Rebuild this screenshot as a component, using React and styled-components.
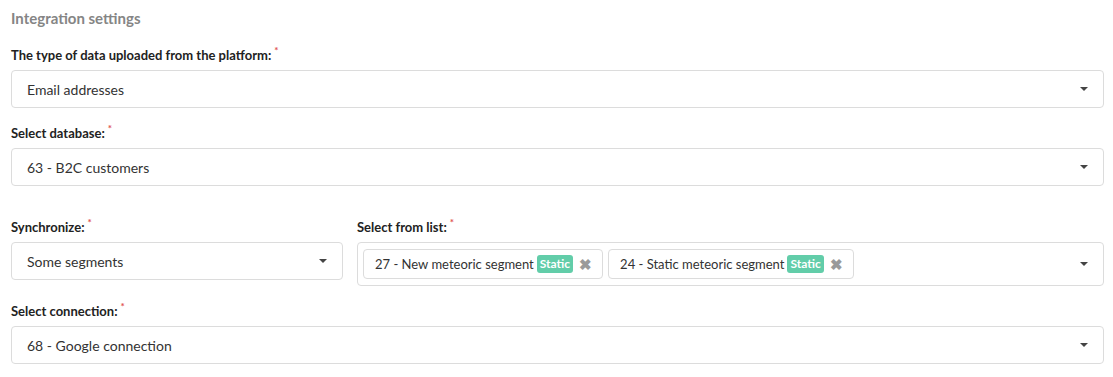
import styled, { createGlobalStyle } from "styled-components";

const GlobalStyle = createGlobalStyle`
  body {
    margin: 0;
    background: #fff;
    font-family: Lato, "Open Sans", sans-serif;
    color: #333;
  }
`;

const Page = styled.div`
  padding: 8px 9px 0 11px;
  display: flex;
  flex-direction: column;
  gap: 16px;
`;

const Title = styled.h3`
  margin: 0 0 2px;
  font-size: 15px;
  line-height: 20px;
  font-weight: 700;
  color: #858585;
`;

const Field = styled.div`
  display: flex;
  flex-direction: column;
  gap: 6px;
  min-width: 0;
`;

const Label = styled.label`
  font-size: 13px;
  line-height: 18px;
  font-weight: 700;
  color: #222;
`;

const Required = styled.sup`
  color: #e05252;
  font-size: 10px;
  margin-left: 3px;
  vertical-align: 6px;
  line-height: 0;
`;

const Control = styled.div`
  position: relative;
  display: flex;
  align-items: center;
  box-sizing: border-box;
  min-height: ${(p) => (p.$multi ? "44px" : "38px")};
  padding: ${(p) => (p.$multi ? "5px 40px 5px 5px" : "0 40px 0 15px")};
  border: 1px solid #dcdcdc;
  border-radius: 4px;
  background: #fff;
  font-size: 14px;
  color: #333;
  gap: 5px;
`;

const Caret = styled.span`
  position: absolute;
  right: 15px;
  top: 50%;
  margin-top: -2px;
  width: 0;
  height: 0;
  border-left: 4px solid transparent;
  border-right: 4px solid transparent;
  border-top: 4px solid #444;
`;

const Row = styled.div`
  display: grid;
  grid-template-columns: 332px 1fr;
  gap: 14px;
  margin-top: 16px;
  align-items: start;
`;

const Tag = styled.span`
  display: inline-flex;
  align-items: center;
  box-sizing: border-box;
  height: 30px;
  padding: 0 10px 0 11px;
  border: 1px solid #dcdcdc;
  border-radius: 4px;
  font-size: 13px;
  color: #333;
  white-space: nowrap;
`;

const Badge = styled.span`
  margin-left: 3px;
  padding: 0 3px;
  height: 18px;
  line-height: 18px;
  border-radius: 3px;
  background: #62cda9;
  color: #fff;
  font-size: 12px;
  font-weight: 700;
`;

const Remove = styled.span`
  margin-left: 6px;
  color: #9a9a9a;
  font-size: 15px;
  font-weight: 700;
  line-height: 1;
`;

function Select({ children, multi }) {
  return (
    <Control $multi={multi}>
      {children}
      <Caret />
    </Control>
  );
}

function FormField({ label, children }) {
  return (
    <Field>
      <Label>
        {label}
        <Required>*</Required>
      </Label>
      {children}
    </Field>
  );
}

const segments = [
  { id: 27, name: "New meteoric segment" },
  { id: 24, name: "Static meteoric segment" },
];

export default function App() {
  return (
    <>
      <GlobalStyle />
      <Page>
        <Title>Integration settings</Title>
        <FormField label="The type of data uploaded from the platform:">
          <Select>Email addresses</Select>
        </FormField>
        <FormField label="Select database:">
          <Select>63 - B2C customers</Select>
        </FormField>
        <Row>
          <FormField label="Synchronize:">
            <Select>Some segments</Select>
          </FormField>
          <FormField label="Select from list:">
            <Select multi>
              {segments.map((s) => (
                <Tag key={s.id}>
                  {s.id} - {s.name}
                  <Badge>Static</Badge>
                  <Remove>✖</Remove>
                </Tag>
              ))}
            </Select>
          </FormField>
        </Row>
        <FormField label="Select connection:">
          <Select>68 - Google connection</Select>
        </FormField>
      </Page>
    </>
  );
}
